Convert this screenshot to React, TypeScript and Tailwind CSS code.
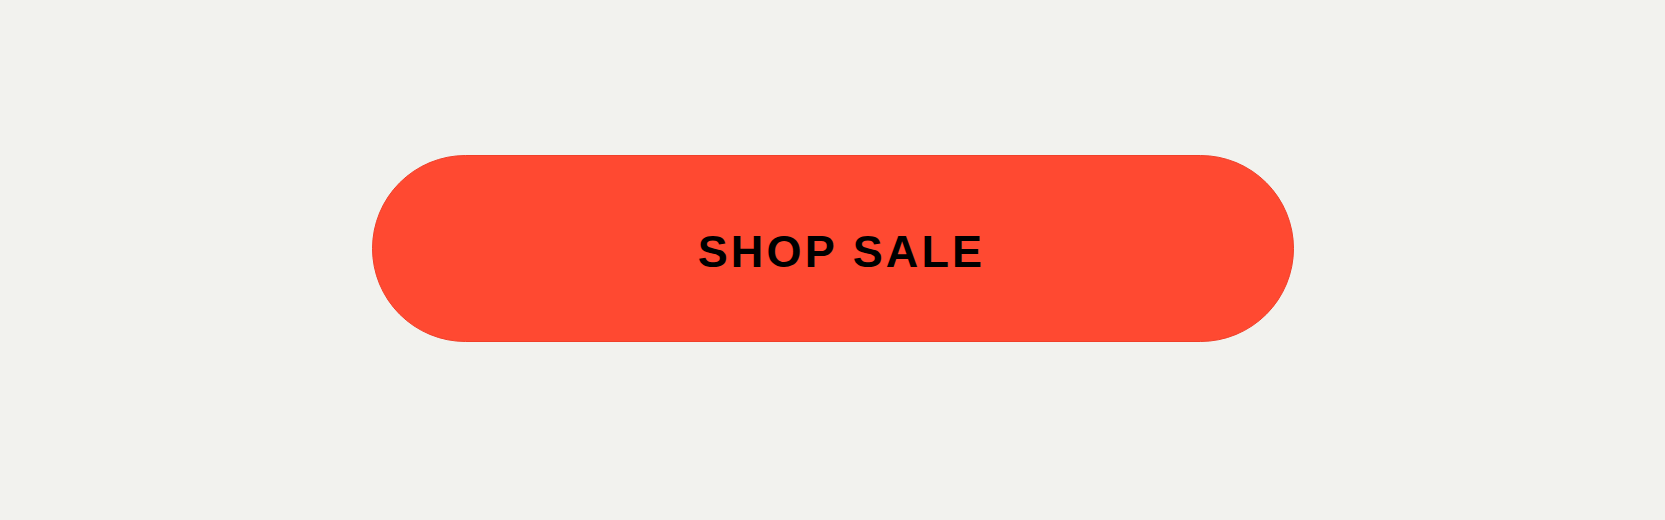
export default function App() {
  return (
    <div className="h-[520px] w-full bg-[#f2f2ee] flex justify-center pt-[155px]">
      <button
        type="button"
        className="w-[922px] h-[187px] rounded-full bg-[#ff4931] border border-[#f0402a] flex items-center justify-center pt-[6px] pl-[18px]"
      >
        <span
          className="text-[45px] font-bold tracking-[0.07em] text-black leading-none"
          style={{ fontFamily: '"Liberation Sans", Arial, sans-serif' }}
        >
          SHOP SALE
        </span>
      </button>
    </div>
  );
}
